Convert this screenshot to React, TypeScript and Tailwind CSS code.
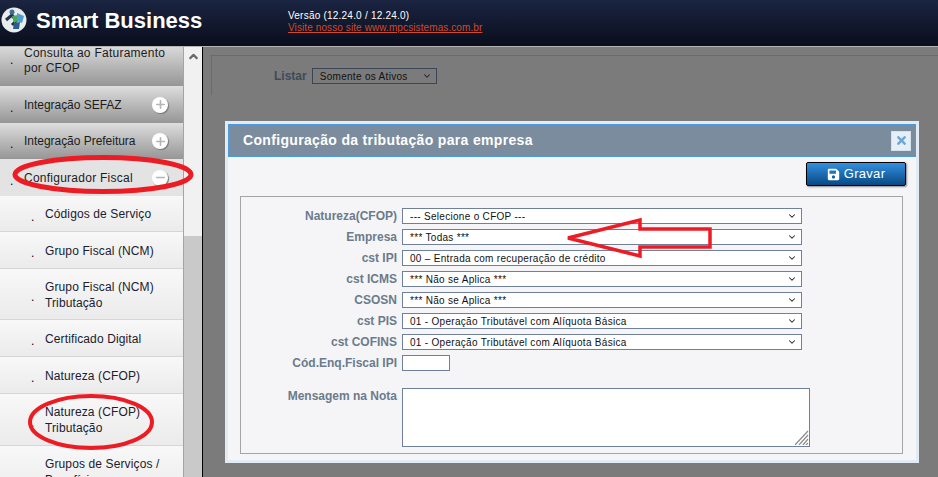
import React from 'react';
import { FaSave, FaTimes } from 'react-icons/fa';
import { ChevronDown, ChevronUp, Minus, Plus } from 'lucide-react';

const SELECTS = [
  { label: 'Natureza(CFOP)', value: '--- Selecione o CFOP ---' },
  { label: 'Empresa', value: '*** Todas ***' },
  { label: 'cst IPI', value: '00 – Entrada com recuperação de crédito' },
  { label: 'cst ICMS', value: '*** Não se Aplica ***' },
  { label: 'CSOSN', value: '*** Não se Aplica ***' },
  { label: 'cst PIS', value: '01 - Operação Tributável com Alíquota Básica' },
  { label: 'cst COFINS', value: '01 - Operação Tributável com Alíquota Básica' },
];

function MenuRow({ lines, state, height, tight }: { lines: string[]; state?: 'plus' | 'minus'; height: string; tight?: boolean }) {
  return (
    <div className={`${height} flex items-center pl-[10px] ${state === 'minus' ? 'bg-[#e3e3e3]' : 'bg-gradient-to-b from-[#dedede] to-[#969696]'}`}>
      <span className="w-[14px] pt-[6px] text-[12px] text-black">.</span>
      <div className={`flex-1 pt-px text-[12px] leading-[15px] text-[#1c1c1c] ${tight ? 'tracking-[-0.03px]' : 'tracking-[0.25px]'}`}>
        {lines.map((l) => (
          <div key={l}>{l}</div>
        ))}
      </div>
      {state && (
        <span className="mr-[15px] flex h-[16px] w-[16px] items-center justify-center rounded-full bg-white shadow-[1px_1px_1px_#777]">
          {state === 'plus' ? (
            <Plus size={13} strokeWidth={3} className="text-[#b5b5b5]" />
          ) : (
            <Minus size={13} strokeWidth={3} className="text-[#b5b5b5]" />
          )}
        </span>
      )}
    </div>
  );
}

function SubRow({ lines, height }: { lines: string[]; height: string }) {
  return (
    <div className={`${height} flex items-center border-b border-[#d6d6d6] bg-gradient-to-b from-[#f8f8f8] to-[#ebebeb] pl-[31px]`}>
      <span className="w-[14px] pt-[6px] text-[12px] text-black">.</span>
      <div className="pt-px text-[12px] leading-[16px] tracking-[0.12px] text-[#1a2030]">
        {lines.map((l) => (
          <div key={l}>{l}</div>
        ))}
      </div>
    </div>
  );
}

function SelectBox({ value, width, dark }: { value: string; width: string; dark?: boolean }) {
  return (
    <div className={`relative h-[16px] ${width}`}>
      <select
        defaultValue="v"
        className={`block h-[16px] w-full appearance-none border pl-[7px] text-[10px] tracking-[0.3px] text-[#111] ${dark ? 'border-[#3a4656] bg-[#7b7b7b]' : 'border-[#71809a] bg-white'}`}
      >
        <option value="v">{value}</option>
      </select>
      <ChevronDown size={10} strokeWidth={2.5} className="pointer-events-none absolute right-[5px] top-[3px] text-[#222]" />
    </div>
  );
}

export default function App() {
  return (
    <div className="relative flex h-[477px] w-[938px] flex-col overflow-hidden bg-[#7b7b7b] font-['Liberation_Sans',Arial,sans-serif]">
      {/* Top bar */}
      <header className="flex h-[47px] shrink-0 items-start border-b border-[#b5b5b5] bg-gradient-to-b from-[#1b2542] to-[#0a0e1c]">
        <svg width="26" height="26" viewBox="0 0 26 26" className="ml-[1px] mt-[7px]">
          <circle cx="13" cy="13" r="12.5" fill="#e8ecec" />
          <path d="M5 13 L11 8 L15 14 L11 18" fill="none" stroke="#22324f" strokeWidth="3" />
          <circle cx="11" cy="5" r="2.5" fill="#3c6f8f" />
          <path d="M11 9 L17 8 L17 14 L13 16 Z" fill="#4da85a" />
          <path d="M16 6 L23 9 L21 16 L16 14 Z" fill="#4b9fd0" />
          <path d="M13 16 L19 15 L18 22 L12 22 Z" fill="#2b5e8c" />
        </svg>
        <div className="ml-[9px] mt-[7px] w-[252px] text-[22px] font-bold leading-[28px] text-white">Smart Business</div>
        <div className="mt-[10px] text-[10px] leading-[12px] tracking-[0.1px]">
          <div className="tracking-[0.22px] text-white">Versão (12.24.0 / 12.24.0)</div>
          <div className="text-[#d0492c] underline">Visite nosso site www.mpcsistemas.com.br</div>
        </div>
      </header>

      <div className="flex min-h-0 flex-1">
        {/* Side menu */}
        <nav className="h-full w-[184px] shrink-0 overflow-hidden border-r border-[#a8a49c]">
          <div className="-mt-[3px]">
            <MenuRow lines={['Consulta ao Faturamento', 'por CFOP']} height="h-[42px] !items-start pt-px" />
            <MenuRow lines={['Integração SEFAZ']} state="plus" height="h-[37px]" tight />
            <MenuRow lines={['Integração Prefeitura']} state="plus" height="h-[36px]" tight />
            <MenuRow lines={['Configurador Fiscal']} state="minus" height="h-[37px]" />
            <SubRow lines={['Códigos de Serviço']} height="h-[36px]" />
            <SubRow lines={['Grupo Fiscal (NCM)']} height="h-[37px]" />
            <SubRow lines={['Grupo Fiscal (NCM)', 'Tributação']} height="h-[51px]" />
            <SubRow lines={['Certificado Digital']} height="h-[37px]" />
            <SubRow lines={['Natureza (CFOP)']} height="h-[37px]" />
            <SubRow lines={['Natureza (CFOP)', 'Tributação']} height="h-[52px]" />
            <SubRow lines={['Grupos de Serviços /', 'Benefícios']} height="h-[52px]" />
          </div>
        </nav>

        {/* Scrollbar */}
        <div className="flex h-full w-[19px] shrink-0 flex-col border-r border-black">
          <div className="flex h-[189px] justify-center bg-[#f1f1f1] pt-[3px]">
            <ChevronUp size={13} strokeWidth={4} className="text-[#6a6a6a]" />
          </div>
          <div className="flex-1 bg-[#c9c9c9]" />
        </div>

        {/* Dimmed page behind the dialog */}
        <main className="flex-1 pl-[8px] pt-[8px]">
          <div className="flex h-[40px] items-start border-l border-t border-[#6a6a6a] pl-[62px] pt-[12px]">
            <span className="mr-[5px] pt-px text-[12px] font-bold leading-[15px] text-[#3f4a59]">Listar</span>
            <SelectBox value="Somente os Ativos" width="w-[125px]" dark />
          </div>
        </main>
      </div>

      {/* Dialog */}
      <div className="absolute left-[225px] top-[121px] h-[342px] w-[694px] border-[3px] border-[#e2eaf3] bg-[#f5f5f8]">
        <div className="flex h-[33px] items-center justify-between border border-[#4a9be0] bg-[#7a8c9e] pl-[14px] pr-[4px]">
          <span className="text-[14px] font-bold tracking-[0.33px] text-white">Configuração da tributação para empresa</span>
          <span className="flex h-[20px] w-[20px] items-center justify-center border border-[#d5e2ee] bg-[#e6eef6]">
            <FaTimes size={13} className="text-[#6fa5d6]" />
          </span>
        </div>
        <div className="flex justify-end pr-[10px] pt-[5px]">
          <button className="flex h-[24px] w-[100px] items-center justify-center gap-[4px] rounded-[2px] border border-black bg-gradient-to-b from-[#3390e0] to-[#064a84] text-[13px] tracking-[0.3px] text-white shadow-[1px_1px_2px_#888]">
            <FaSave size={13} />
            Gravar
          </button>
        </div>
        <div className="ml-[12px] mt-[10px] h-[258px] w-[663px] border border-[#a5a5a5] pt-[11px]">
          <div className="grid grid-cols-[156px_1fr] gap-x-[5px] gap-y-[5px]">
            {SELECTS.map((s) => (
              <React.Fragment key={s.label}>
                <label className="pt-px text-right text-[12px] font-bold leading-[15px] text-[#6b7b8c]">{s.label}</label>
                <SelectBox value={s.value} width="w-[400px]" />
              </React.Fragment>
            ))}
            <label className="pt-px text-right text-[12px] font-bold leading-[15px] text-[#6b7b8c]">Cód.Enq.Fiscal IPI</label>
            <input className="h-[16px] w-[48px] border border-[#71809a] bg-white" />
            <label className="mt-[12px] pt-px text-right text-[12px] font-bold leading-[15px] text-[#6b7b8c]">Mensagem na Nota</label>
            <div className="relative mt-[12px] h-[59px] w-[408px]">
              <textarea className="block h-full w-full resize-none border border-[#71809a] bg-white" />
              <svg width="14" height="15" viewBox="0 0 14 15" className="pointer-events-none absolute bottom-[2px] right-[1px]">
                <path d="M0 15 L13 1 M4 15 L13 5 M8 15 L13 9 M11 15 L13 13" fill="none" stroke="#8a8a8a" strokeWidth="1.2" />
              </svg>
            </div>
          </div>
        </div>
      </div>

      {/* Red marks drawn over the screenshot */}
      <svg width="938" height="477" className="pointer-events-none absolute left-0 top-0">
        <ellipse cx="103" cy="174.5" rx="88" ry="17" fill="none" stroke="#ed1c24" strokeWidth="5" />
        <ellipse cx="91" cy="422" rx="61" ry="26" fill="none" stroke="#ed1c24" strokeWidth="4" />
        <path d="M568 238 L640 220 L640 229 L710 229 L710 247 L640 247 L640 256 Z" fill="none" stroke="#ed1c24" strokeWidth="3.5" />
      </svg>
    </div>
  );
}
